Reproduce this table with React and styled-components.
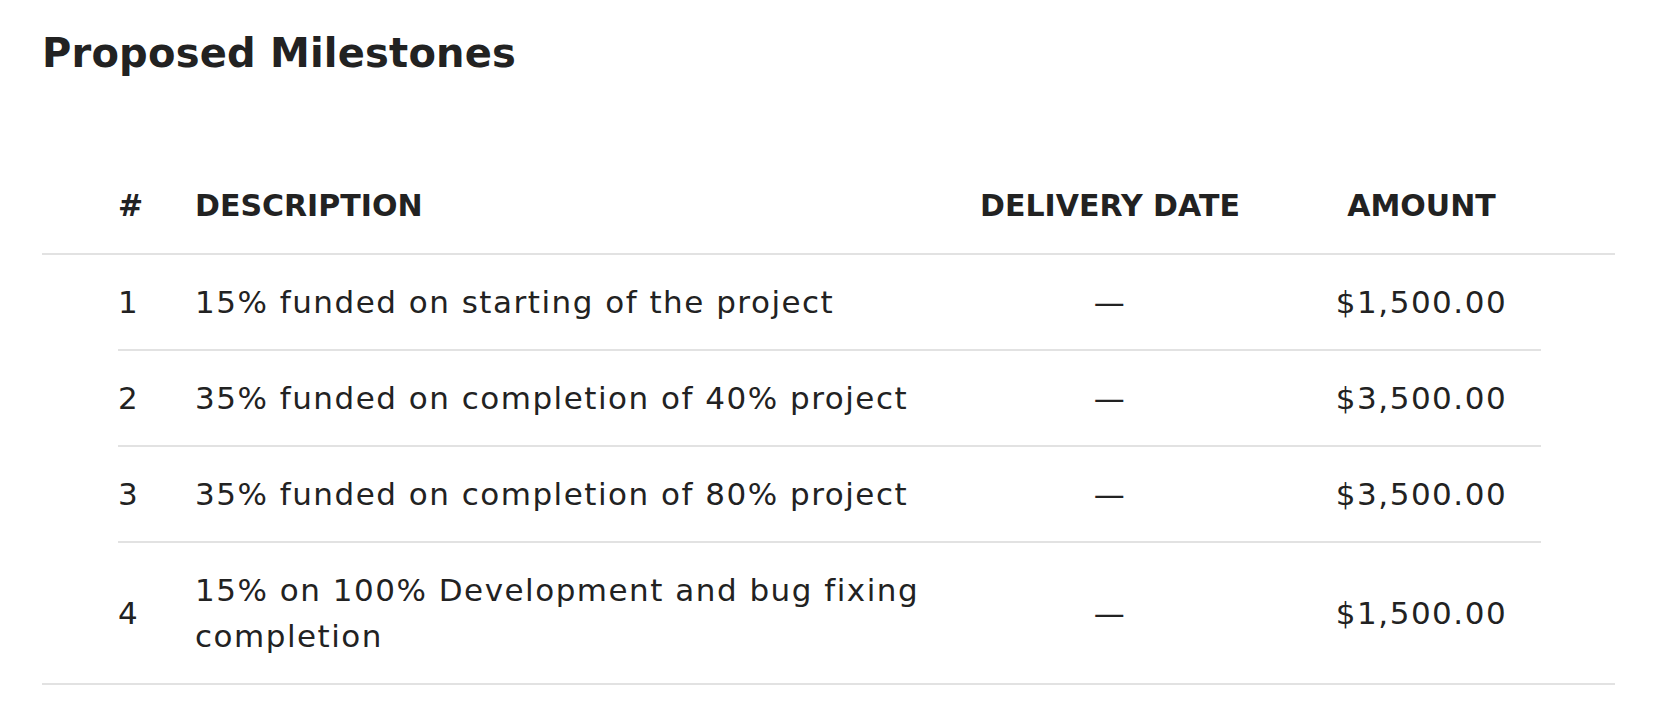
import React from "react";
import styled, { createGlobalStyle } from "styled-components";

const GlobalStyle = createGlobalStyle`
  * {
    box-sizing: border-box;
  }
  body {
    margin: 0;
    background: #ffffff;
    font-family: "DejaVu Sans", "Liberation Sans", sans-serif;
    color: #222222;
  }
`;

const milestones = [
  { id: 1, description: "15% funded on starting of the project", amount: "$1,500.00" },
  { id: 2, description: "35% funded on completion of 40% project", amount: "$3,500.00" },
  { id: 3, description: "35% funded on completion of 80% project", amount: "$3,500.00" },
  { id: 4, description: "15% on 100% Development and bug fixing completion", amount: "$1,500.00" },
];

const St = {
  Page: styled.section`
    padding: 25px 51px 0 42px;
  `,
  Title: styled.h2`
    margin: 0;
    font-size: 40px;
    line-height: 56px;
    font-weight: 700;
    letter-spacing: 0.2px;
    color: #222222;
  `,
  Table: styled.div`
    margin-top: 78px;
    border-bottom: 2px solid #e2e2e2;
  `,
  Head: styled.div`
    padding: 0 74px 0 76px;
    border-bottom: 2px solid #e2e2e2;
  `,
  Body: styled.div`
    padding: 0 74px 0 76px;
  `,
  Row: styled.div`
    display: grid;
    grid-template-columns: 77px 1fr 280px 291px;
    align-items: center;
    padding: 24px 0;
    border-bottom: ${({ last }) => (last ? "none" : "2px solid #e2e2e2")};
  `,
  HeadCell: styled.div`
    font-size: 30px;
    line-height: 46px;
    font-weight: 700;
    text-transform: uppercase;
    white-space: nowrap;
    text-align: ${({ align }) => align || "left"};
    padding-left: ${({ offset }) => offset || "0"};
  `,
  Cell: styled.div`
    font-size: 31px;
    line-height: 46px;
    font-weight: 400;
    letter-spacing: 1.5px;
    text-align: ${({ align }) => align || "left"};
    padding-left: ${({ offset }) => offset || "0"};
  `,
};

const App = () => {
  return (
    <St.Page>
      <GlobalStyle />
      <St.Title>Proposed Milestones</St.Title>
      <St.Table>
        <St.Head>
          <St.Row last>
            <St.HeadCell>#</St.HeadCell>
            <St.HeadCell>Description</St.HeadCell>
            <St.HeadCell align="center">Delivery Date</St.HeadCell>
            <St.HeadCell align="center" offset="52px">
              Amount
            </St.HeadCell>
          </St.Row>
        </St.Head>
        <St.Body>
          {milestones.map((m, i) => (
            <St.Row key={m.id} last={i === milestones.length - 1}>
              <St.Cell>{m.id}</St.Cell>
              <St.Cell>{m.description}</St.Cell>
              <St.Cell align="center">—</St.Cell>
              <St.Cell align="center" offset="52px">
                {m.amount}
              </St.Cell>
            </St.Row>
          ))}
        </St.Body>
      </St.Table>
    </St.Page>
  );
};

export default App;
